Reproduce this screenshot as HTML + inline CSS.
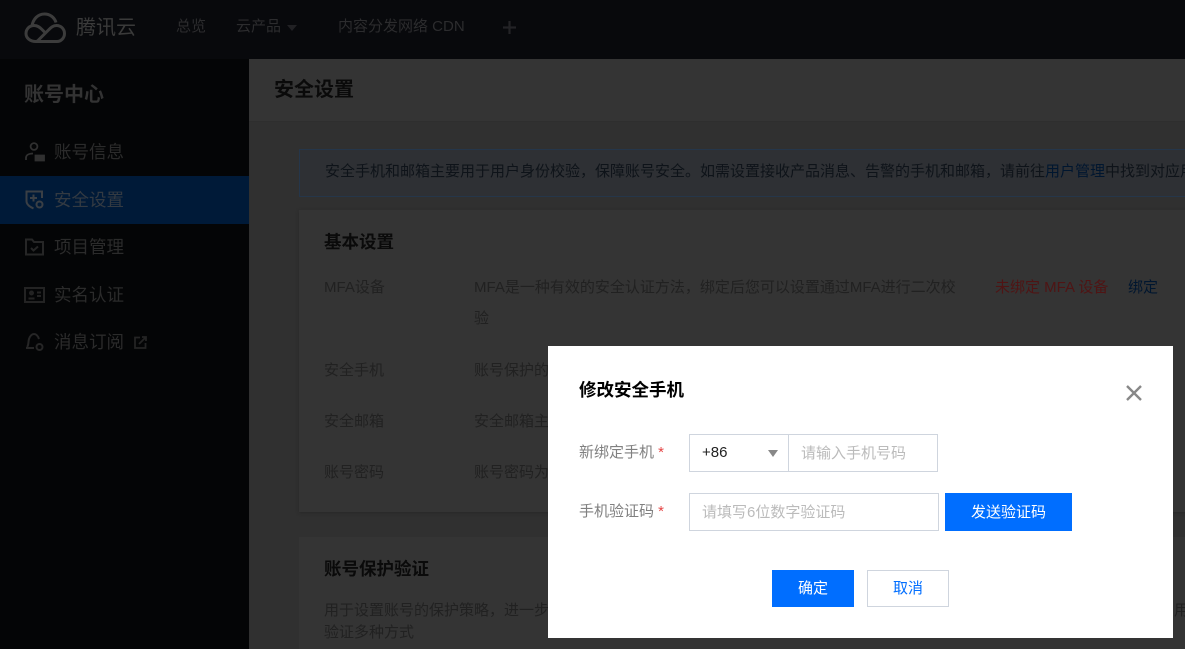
<!DOCTYPE html>
<html lang="zh"><head><meta charset="utf-8"><title>安全设置</title>
<style>
html,body{margin:0;padding:0;width:1185px;height:649px;overflow:hidden;background:#303030}
body{position:relative;font-family:"Liberation Sans","Noto Sans CJK SC",sans-serif;font-size:15px}
.a{position:absolute;white-space:nowrap;line-height:20px}
.b{position:absolute;box-sizing:border-box}
svg{position:absolute;overflow:visible}
.n{color:#2c2c2e;font-size:15px}
.s{color:#2b2b2b;font-size:17.5px;left:54px;line-height:24px}
.l{color:#212121}
.d{color:#212121}
.h{color:#0a0a0a;font-weight:700;font-size:17.5px;line-height:24px}
.m{color:#808080}
.st{color:#e54545;font-size:15px}
.ph{color:#bbb}
</style></head><body>
<div class="b" style="left:0;top:0;width:1185px;height:59px;background:#08090c"></div>
<div class="b" style="left:0;top:59px;width:249px;height:590px;background:#040506"></div>
<div class="b" style="left:0;top:176px;width:249px;height:48px;background:#001a38"></div>
<div class="b" style="left:249px;top:59px;width:936px;height:63px;background:#343434;border-bottom:1px solid #2e2e2e"></div>

<svg style="left:24px;top:12px" width="42" height="32" viewBox="0 0 42 32" fill="none" stroke="#3c3c3c" stroke-width="3"><path d="M8 14C9 7 14 2 20.500 2C26 2 30.500 5.500 32 10.500"/><path d="M12 29.500H33C37 29.500 40.500 26 40.500 21.500C40.500 17 37 13.500 32.500 13.500C29 13.500 27 15.500 24 18.500L16 26.500C14.500 28 13.500 29.500 12 29.500C6 29.500 2 26 2 21.500C2 17 5.500 13.500 10 13.500C13.500 13.500 15.500 15 18 17.500L21 20.500"/></svg>
<div class="a" style="left:76px;top:15px;font-size:20px;line-height:26px;color:#3a3a3a">腾讯云</div>
<div class="a n" style="left:176px;top:17px">总览</div>
<div class="a n" style="left:236px;top:17px">云产品</div>
<div class="b" style="left:287px;top:25px;border:5px solid transparent;border-top:6px solid #212124;border-bottom:0"></div>
<div class="a n" style="left:338px;top:17px">内容分发网络 CDN</div>
<svg style="left:503px;top:21px" width="13" height="13" viewBox="0 0 13 13" stroke="#232326" stroke-width="2.200"><path d="M6.500 0v13M0 6.500h13"/></svg>

<div class="a" style="left:24px;top:82px;font-size:20px;line-height:26px;font-weight:700;color:#333">账号中心</div>
<svg style="left:25px;top:142px" width="20" height="20" viewBox="0 0 20 20" fill="none" stroke="#303030" stroke-width="1.800"><circle cx="9" cy="4.500" r="3.400"/><path d="M1 18v-2c0-3 3-4.500 7-4.500"/><path d="M10.500 13.500h8.500v5h-8.500z" fill="#303030"/></svg>
<div class="a s" style="top:140px">账号信息</div>
<svg style="left:25px;top:190px" width="20" height="20" viewBox="0 0 20 20" fill="none" stroke="#3a3f45" stroke-width="2"><path d="M17 8V1.500H1.500V11c0 4 4 6 7 7.500"/><path d="M5 8h7M8.500 4.500v7"/><circle cx="14.500" cy="14.500" r="3"/></svg>
<div class="a s" style="top:188px;color:#333a42">安全设置</div>
<svg style="left:25px;top:238px" width="19" height="18" viewBox="0 0 19 18" fill="none" stroke="#262626" stroke-width="2"><path d="M1 16.500V1.500h6l2 2.500h9v12.500z"/><path d="M6 10l2.500 2.500 4.500-4"/></svg>
<div class="a s" style="top:235px">项目管理</div>
<svg style="left:24px;top:287px" width="21" height="16" viewBox="0 0 21 16" fill="none" stroke="#232323" stroke-width="2"><path d="M1 1h19v14H1z"/><path d="M4.500 11.500h6M13 5.500h4M13 9h4"/><circle cx="7.500" cy="6" r="1.500" fill="#232323"/></svg>
<div class="a s" style="top:283px">实名认证</div>
<svg style="left:25px;top:332px" width="20" height="20" viewBox="0 0 20 20" fill="none" stroke="#262626" stroke-width="2"><path d="M2 15c2-2 1-5 2-8 1-3 3-5 5-5s4 2 5 5M1 16h8"/><circle cx="14.500" cy="15" r="3"/></svg>
<div class="a s" style="top:330px">消息订阅</div>
<svg style="left:134px;top:336px" width="13" height="13" viewBox="0 0 13 13" fill="none" stroke="#242424" stroke-width="1.800"><path d="M6 1.500H1v10.500h10.500V7M5 8l7-7M8 1h4v4"/></svg>

<div class="a" style="left:274px;top:77px;font-size:20px;line-height:26px;font-weight:700;color:#0a0a0a">安全设置</div>

<div class="b" style="left:299px;top:149px;width:900px;height:48px;background:#2e3034;border:1px solid #25364a"></div>
<div class="a" style="left:325px;top:162px;color:#0e1319">安全手机和邮箱主要用于用户身份校验，保障账号安全。如需设置接收产品消息、告警的手机和邮箱，请前往<span style="color:#00162f">用户管理</span>中找到对应用户设置</div>

<div class="b" style="left:299px;top:210px;width:900px;height:302px;background:#343434;box-shadow:0 1px 3px #282828"></div>
<div class="a h" style="left:324px;top:230px">基本设置</div>
<div class="a l" style="left:324px;top:278px">MFA设备</div>
<div class="a d" style="left:474px;top:278px">MFA是一种有效的安全认证方法，绑定后您可以设置通过MFA进行二次校</div>
<div class="a d" style="left:474px;top:309px">验</div>
<div class="a" style="left:995px;top:278px;color:#4f1414">未绑定 MFA 设备</div>
<div class="a" style="left:1128px;top:278px;color:#00162f">绑定</div>
<div class="a l" style="left:324px;top:361px">安全手机</div>
<div class="a d" style="left:474px;top:361px">账号保护的手机号码</div>
<div class="a l" style="left:324px;top:412px">安全邮箱</div>
<div class="a d" style="left:474px;top:412px">安全邮箱主要用于接收</div>
<div class="a l" style="left:324px;top:463px">账号密码</div>
<div class="a d" style="left:474px;top:463px">账号密码为登录使用的</div>

<div class="b" style="left:299px;top:537px;width:900px;height:120px;background:#343434"></div>
<div class="a h" style="left:324px;top:557px">账号保护验证</div>
<div class="a d" style="left:324px;top:601px">用于设置账号的保护策略，进一步保障账号安全</div>
<div class="a d" style="left:324px;top:623px">验证多种方式</div>
<div class="a d" style="left:1174px;top:601px">用到</div>

<div class="b" style="left:548px;top:346px;width:625px;height:292px;background:#fff"></div>
<div class="a" style="left:579px;top:378px;font-size:17.500px;line-height:24px;font-weight:700;color:#000">修改安全手机</div>
<svg style="left:1127px;top:386px" width="14" height="14" viewBox="0 0 14 14" stroke="#888" stroke-width="2.400"><path d="M0 0l14 14M14 0L0 14"/></svg>

<div class="a m" style="left:579px;top:443px">新绑定手机 <span class="st">*</span></div>
<div class="b" style="left:689px;top:434px;width:249px;height:38px;border:1px solid #cfd5de"></div>
<div class="b" style="left:788px;top:434px;width:1px;height:38px;background:#cfd5de"></div>
<div class="a" style="left:702px;top:443px;color:#222">+86</div>
<div class="b" style="left:768px;top:450px;border:5.500px solid transparent;border-top:7px solid #888;border-bottom:0"></div>
<div class="a ph" style="left:801px;top:444px">请输入手机号码</div>

<div class="a m" style="left:579px;top:502px">手机验证码 <span class="st">*</span></div>
<div class="b" style="left:689px;top:493px;width:250px;height:38px;border:1px solid #cfd5de"></div>
<div class="a ph" style="left:702px;top:503px">请填写6位数字验证码</div>
<div class="b" style="left:945px;top:493px;width:127px;height:38px;background:#006eff"></div>
<div class="a" style="left:945px;top:503px;width:127px;text-align:center;color:#fff">发送验证码</div>

<div class="b" style="left:772px;top:570px;width:82px;height:37px;background:#006eff"></div>
<div class="a" style="left:772px;top:579px;width:82px;text-align:center;color:#fff">确定</div>
<div class="b" style="left:867px;top:570px;width:82px;height:37px;background:#fff;border:1px solid #cfd5de"></div>
<div class="a" style="left:867px;top:579px;width:82px;text-align:center;color:#006eff">取消</div>
</body></html>
